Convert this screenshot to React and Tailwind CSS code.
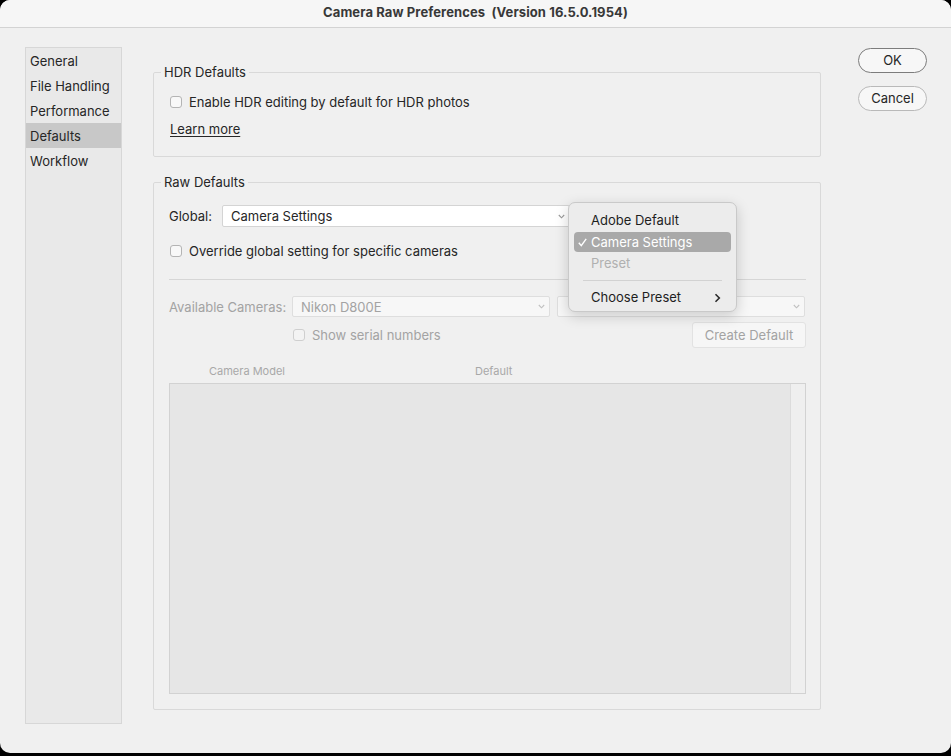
import React from 'react';

const font = { fontFamily: 'Inter, "Liberation Sans", Arial, sans-serif' };

function Chevron({ className = 'text-[#9a9a9a]' }) {
  return (
    <svg width="7" height="5" viewBox="0 0 7 5" className={className}>
      <path d="M0.8 1 L3.5 3.8 L6.2 1" fill="none" stroke="currentColor" strokeWidth="1.1" />
    </svg>
  );
}

function Checkbox({ disabled }) {
  return (
    <span
      className={
        'inline-block w-[12px] h-[12px] rounded-[3px] border shrink-0 ' +
        (disabled ? 'border-[#cfcfcf] bg-[#f3f3f3]' : 'border-[#b4b4b4] bg-[#f8f8f8]')
      }
    />
  );
}

const sideItems = ['General', 'File Handling', 'Performance', 'Defaults', 'Workflow'];

function Menu() {
  return (
    <div className="absolute left-[346px] top-[-3px] w-[169px] h-[110px] rounded-[7px] bg-[#ececec] border border-[#c9c9c9] shadow-[0_4px_14px_rgba(0,0,0,0.18)] pt-[6px] px-[5px] text-[13px] text-[#1e1e1e] z-10">
      <div className="h-[22px] flex items-center pl-[17px] pt-[1px]">Adobe Default</div>
      <div className="h-[22px] flex items-center">
        <div className="h-[20px] w-full rounded-[4px] bg-[#a9a9a9] text-white flex items-center pt-[1px]">
          <span className="w-[17px] pl-[4px] flex items-center">
            <svg width="9" height="9" viewBox="0 0 9 9">
              <path d="M0.8 4.8 L3.3 7.6 L8.2 0.9" fill="none" stroke="white" strokeWidth="1.4" />
            </svg>
          </span>
          <span>Camera Settings</span>
        </div>
      </div>
      <div className="h-[22px] flex items-center pl-[17px] text-[#b0b0b0]">Preset</div>
      <div className="h-[11px] flex items-center px-[9px]">
        <div className="h-px w-full bg-[#d2d2d2]" />
      </div>
      <div className="h-[22px] flex items-center justify-between pl-[17px] pr-[10px] pt-[1px]">
        <span>Choose Preset</span>
        <svg width="7" height="10" viewBox="0 0 7 10">
          <path d="M1.5 1.2 L5.3 5 L1.5 8.8" fill="none" stroke="#2a2a2a" strokeWidth="1.6" />
        </svg>
      </div>
    </div>
  );
}

export default function App() {
  return (
    <div className="w-[951px] h-[756px] bg-black overflow-hidden" style={font}>
      <div className="w-[951px] h-[753px] bg-[#f0f0f0] rounded-b-[10px] rounded-t-[10px] flex flex-col">
        <div className="h-[28px] shrink-0 bg-[#f6f6f6] border-b border-[#d3d3d3] rounded-t-[10px] flex items-center justify-center text-[13px] font-bold text-[#383838] tracking-[0.1px] pb-[2px]">
          Camera Raw Preferences&nbsp;&nbsp;(Version 16.5.0.1954)
        </div>

        <div className="flex pt-[19px]">
          <div className="ml-[25px] w-[97px] h-[677px] bg-[#e9e9e9] border border-[#d7d7d7] text-[13px] text-[#262626]">
            {sideItems.map((s) => (
              <div
                key={s}
                className={'h-[25px] flex items-center pl-[4px] pt-[2px] ' + (s === 'Defaults' ? 'bg-[#c8c8c8]' : '')}
              >
                {s}
              </div>
            ))}
          </div>

          <div className="ml-[31px] w-[668px] pt-[17px] text-[13px] text-[#262626]">
            <fieldset className="h-[93px] border border-[#d9d9d9] rounded-[2px]">
              <legend className="ml-[7px] px-[3px] h-[16px] leading-[16px]">HDR Defaults</legend>
              <div className="pl-[16px]">
                <div className="mt-[12px] h-[20px] flex items-center gap-[7px]">
                  <Checkbox />
                  <span className="pt-[2px]">Enable HDR editing by default for HDR photos</span>
                </div>
                <div className="mt-[7px] h-[20px] flex items-center pt-[2px]">
                  <span className="underline underline-offset-2">Learn more</span>
                </div>
              </div>
            </fieldset>

            <fieldset className="mt-[17px] h-[536px] border border-[#d9d9d9] rounded-[2px]">
              <legend className="ml-[7px] px-[3px] h-[16px] leading-[16px]">Raw Defaults</legend>
              <div className="pl-[15px] pr-[14px]">
                <div className="mt-[15px] h-[22px] flex items-center">
                  <span className="w-[53px] pt-[2px]">Global:</span>
                  <div className="relative w-[348px] h-[22px]">
                    <div className="w-full h-full bg-white border border-[#d4d4d4] rounded-[2px] flex items-center justify-between pl-[8px] pr-[4px]">
                      <span className="pt-[2px]">Camera Settings</span>
                      <Chevron />
                    </div>
                    <Menu />
                  </div>
                </div>

                <div className="mt-[14px] h-[20px] flex items-center gap-[7px] pl-[1px]">
                  <Checkbox />
                  <span className="pt-[2px]">Override global setting for specific cameras</span>
                </div>

                <div className="mt-[18px] h-px bg-[#d6d6d6]" />

                <div className="mt-[16px] h-[21px] flex items-center text-[#a3a3a3]">
                  <span className="w-[123px] pt-[2px]">Available Cameras:</span>
                  <div className="w-[258px] h-[21px] bg-[#f7f7f7] border border-[#dedede] rounded-[2px] flex items-center justify-between pl-[8px] pr-[4px]">
                    <span className="pt-[2px]">Nikon D800E</span>
                    <Chevron className="text-[#c0c0c0]" />
                  </div>
                  <div className="ml-[7px] w-[248px] h-[21px] bg-[#f7f7f7] border border-[#dedede] rounded-[2px] flex items-center justify-end pr-[4px]">
                    <Chevron className="text-[#c0c0c0]" />
                  </div>
                </div>

                <div className="mt-[5px] h-[26px] flex items-center text-[#a3a3a3]">
                  <div className="ml-[124px] flex items-center gap-[7px]">
                    <Checkbox disabled />
                    <span className="pt-[2px]">Show serial numbers</span>
                  </div>
                  <div className="ml-auto w-[114px] h-[26px] bg-[#f6f6f6] border border-[#e2e2e2] rounded-[3px] flex items-center justify-center pt-[2px]">
                    Create Default
                  </div>
                </div>

                <div className="mt-[16px] h-[14px] flex items-center text-[11px] text-[#a8a8a8]">
                  <span className="ml-[40px] w-[266px]">Camera Model</span>
                  <span>Default</span>
                </div>

                <div className="mt-[5px] h-[311px] border border-[#d2d2d2] bg-[#e6e6e6] flex justify-end">
                  <div className="w-[15px] h-full bg-[#efefef] border-l border-[#dcdcdc]" />
                </div>
              </div>
            </fieldset>
          </div>

          <div className="ml-[37px] pt-[1px] flex flex-col gap-[13px] text-[13px] text-[#262626]">
            <div className="w-[69px] h-[25px] rounded-full border border-[#7c7c7c] bg-[#f7f7f7] flex items-center justify-center">
              OK
            </div>
            <div className="w-[69px] h-[25px] rounded-full border border-[#b9b9b9] bg-[#f7f7f7] flex items-center justify-center">
              Cancel
            </div>
          </div>
        </div>
      </div>
    </div>
  );
}
